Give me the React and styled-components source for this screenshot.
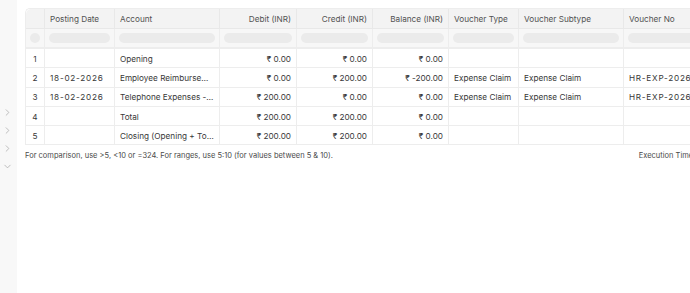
import React from "react";
import styled, { createGlobalStyle } from "styled-components";

const Global = createGlobalStyle`
  html, body { margin: 0; padding: 0; background: #fff; }
  body { font-family: Inter, "Noto Sans", sans-serif; color: #383838; -webkit-font-smoothing: antialiased; }
  * { box-sizing: border-box; }
`;

const Page = styled.div`
  display: flex;
  width: 690px;
  height: 293px;
  overflow: hidden;
`;

const Sidebar = styled.div`
  flex: 0 0 17px;
  background: #f8f8f8;
  display: flex;
  flex-direction: column;
  align-items: flex-start;
  padding: 107px 0 0 2px;
  gap: 7px;
`;

const Chevron = styled.svg`
  width: 11px;
  height: 11px;
  display: block;
  color: #a8a8a8;
`;

const Main = styled.div`
  flex: 1;
  min-width: 0;
  background: #fff;
  padding: 8px 0 0 8px;
  overflow: hidden;
`;

const Table = styled.table`
  border-collapse: separate;
  border-spacing: 0;
  table-layout: fixed;
  width: 720px;
  font-size: 8.2px;
  border-top: 1px solid #ededed;
  border-left: 1px solid #ededed;
  border-top-left-radius: 5px;
  overflow: hidden;
`;

const HeadCell = styled.th`
  height: 20px;
  background: #f3f3f3;
  font-weight: 400;
  color: #525252;
  text-align: ${(p) => (p.$right ? "right" : "left")};
  padding: 0 5px;
  border-right: 1px solid #e8e8e8;
  border-bottom: 1px solid #e8e8e8;
  white-space: nowrap;
  overflow: hidden;
  &:first-child { border-top-left-radius: 5px; }
`;

const FilterCell = styled.td`
  height: 20px;
  background: #f7f7f7;
  padding: 0 4px;
  border-right: 1px solid #ededed;
  border-bottom: 2px solid #ededed;
  vertical-align: middle;
`;

const Pill = styled.div`
  height: 10px;
  width: ${(p) => (p.$round ? "10px" : "auto")};
  border-radius: 5px;
  background: #ebebeb;
  margin: 0 ${(p) => (p.$round ? "auto" : "0")};
`;

const Cell = styled.td`
  height: 19.3px;
  padding: 1px 5px 0;
  border-right: 1px solid #ededed;
  border-bottom: 1px solid #ededed;
  text-align: ${(p) => p.$align || "left"};
  white-space: nowrap;
  overflow: hidden;
  text-overflow: ellipsis;
  color: #383838;
  letter-spacing: ${(p) => (p.$wide ? "0.75px" : "0")};
  vertical-align: middle;
`;

const Footer = styled.div`
  width: 708px;
  display: flex;
  justify-content: space-between;
  padding-top: 6px;
  font-size: 7.5px;
  line-height: 10px;
  color: #4a4a4a;
`;

const columns = [
  { key: "idx", label: "", width: 19 },
  { key: "date", label: "Posting Date", width: 70 },
  { key: "account", label: "Account", width: 105 },
  { key: "debit", label: "Debit (INR)", width: 77, right: true },
  { key: "credit", label: "Credit (INR)", width: 76, right: true },
  { key: "balance", label: "Balance (INR)", width: 76, right: true },
  { key: "vtype", label: "Voucher Type", width: 70 },
  { key: "vsub", label: "Voucher Subtype", width: 105 },
  { key: "vno", label: "Voucher No", width: 122 },
];

const rows = [
  { idx: "1", date: "", account: "Opening", debit: "₹ 0.00", credit: "₹ 0.00", balance: "₹ 0.00", vtype: "", vsub: "", vno: "" },
  { idx: "2", date: "18-02-2026", account: "Employee Reimbursement - TC", debit: "₹ 0.00", credit: "₹ 200.00", balance: "₹ -200.00", vtype: "Expense Claim", vsub: "Expense Claim", vno: "HR-EXP-2026-00001" },
  { idx: "3", date: "18-02-2026", account: "Telephone Expenses - TC", debit: "₹ 200.00", credit: "₹ 0.00", balance: "₹ 0.00", vtype: "Expense Claim", vsub: "Expense Claim", vno: "HR-EXP-2026-00001" },
  { idx: "4", date: "", account: "Total", debit: "₹ 200.00", credit: "₹ 200.00", balance: "₹ 0.00", vtype: "", vsub: "", vno: "" },
  { idx: "5", date: "", account: "Closing (Opening + Total)", debit: "₹ 200.00", credit: "₹ 200.00", balance: "₹ 0.00", vtype: "", vsub: "", vno: "" },
];

const ChevronRight = () => (
  <Chevron viewBox="0 0 24 24" fill="none" stroke="currentColor" strokeWidth="1.6" strokeLinecap="round" strokeLinejoin="round">
    <path d="M9 6l6 6-6 6" />
  </Chevron>
);
const ChevronDown = () => (
  <Chevron viewBox="0 0 24 24" fill="none" stroke="currentColor" strokeWidth="1.6" strokeLinecap="round" strokeLinejoin="round">
    <path d="M6 9l6 6 6-6" />
  </Chevron>
);

export default function App() {
  return (
    <>
      <Global />
      <Page>
        <Sidebar>
          <ChevronRight />
          <ChevronRight />
          <ChevronRight />
          <ChevronDown />
        </Sidebar>
        <Main>
          <Table>
            <colgroup>
              {columns.map((c) => (
                <col key={c.key} style={{ width: c.width }} />
              ))}
            </colgroup>
            <thead>
              <tr>
                {columns.map((c) => (
                  <HeadCell key={c.key} $right={c.right}>{c.label}</HeadCell>
                ))}
              </tr>
              <tr>
                {columns.map((c) => (
                  <FilterCell key={c.key}>
                    <Pill $round={c.key === "idx"} />
                  </FilterCell>
                ))}
              </tr>
            </thead>
            <tbody>
              {rows.map((r) => (
                <tr key={r.idx}>
                  {columns.map((c) => (
                    <Cell
                      key={c.key}
                      $align={c.key === "idx" ? "center" : c.right ? "right" : "left"}
                      $wide={c.key === "date" || c.key === "vno"}
                    >
                      {r[c.key]}
                    </Cell>
                  ))}
                </tr>
              ))}
            </tbody>
          </Table>
          <Footer>
            <span>For comparison, use &gt;5, &lt;10 or =324. For ranges, use 5:10 (for values between 5 &amp; 10).</span>
            <span>Execution Time: 0.004 sec</span>
          </Footer>
        </Main>
      </Page>
    </>
  );
}
